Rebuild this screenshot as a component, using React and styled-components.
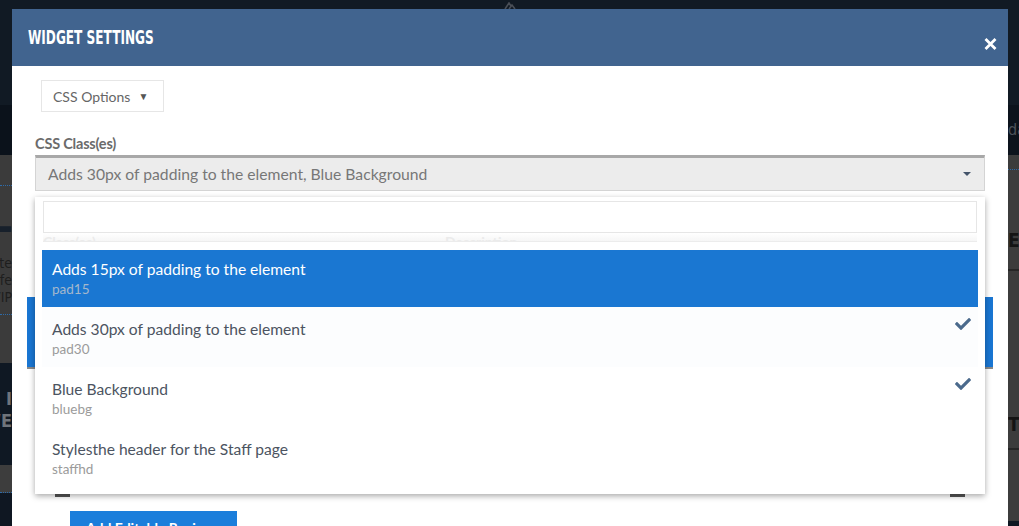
import React from "react";
import styled, { createGlobalStyle } from "styled-components";
import { FaCheck } from "react-icons/fa";

const GlobalStyle = createGlobalStyle`
  html, body {
    margin: 0;
    padding: 0;
  }
  body {
    background: #0f1722;
    font-family: Lato, "Open Sans", sans-serif;
    overflow: hidden;
  }
  * {
    box-sizing: border-box;
  }
`;

const Screen = styled.div`
  position: relative;
  width: 1019px;
  height: 526px;
  overflow: hidden;
  background: #0f1722;
`;

// page behind the modal
const Backdrop = styled.div`
  display: flex;
  flex-direction: column;
  height: 100%;
`;
const TopBar = styled.div`
  height: 105px;
  flex-shrink: 0;
  background: #111a24;
  display: flex;
  justify-content: center;
  svg {
    margin-top: 2px;
  }
`;
const Lower = styled.div`
  flex: 1;
  display: flex;
  justify-content: space-between;
`;
const Rail = styled.div`
  width: ${p => p.$w}px;
  display: flex;
  flex-direction: column;
  overflow: hidden;
`;
const Band = styled.div`
  height: ${p => p.$h}px;
  flex-shrink: 0;
  background: ${p => p.$bg};
  border-bottom: ${p => p.$line || "none"};
  display: flex;
  flex-direction: column;
  justify-content: ${p => p.$justify || "center"};
  align-items: ${p => p.$align || "flex-start"};
  padding-bottom: ${p => p.$pb || 0}px;
  overflow: hidden;
`;
const RailText = styled.span`
  white-space: nowrap;
  font-family: "DejaVu Sans Condensed", "DejaVu Sans", sans-serif;
  font-weight: ${p => p.$weight || 400};
  font-size: ${p => p.$size}px;
  line-height: ${p => p.$lh || p.$size}px;
  color: ${p => p.$color};
  margin-top: ${p => p.$mt || 0}px;
`;
const Dotted = styled.div`
  width: 100%;
  border-top: 1px dotted #2d6aa8;
  margin-top: ${p => p.$mt || 0}px;
`;

// modal
const Modal = styled.div`
  position: absolute;
  top: 9px;
  left: 12px;
  width: 996px;
  bottom: -120px;
  background: #fff;
  display: flex;
  flex-direction: column;
`;
const Header = styled.div`
  height: 57px;
  flex-shrink: 0;
  background: #41648f;
  display: flex;
  align-items: center;
  justify-content: space-between;
  padding: 0 11px 0 16px;
`;
const Title = styled.h4`
  margin: 0;
  color: #fff;
  font-family: "DejaVu Sans Condensed", "DejaVu Sans", sans-serif;
  font-weight: 700;
  font-size: 19.5px;
  line-height: 24px;
  white-space: nowrap;
  transform: scaleX(0.69);
  transform-origin: left center;
`;
const Close = styled.button`
  border: 0;
  background: none;
  padding: 0;
  margin-top: 12px;
  display: flex;
  cursor: pointer;
`;
const Body = styled.div`
  padding: 14px 23px 0;
  display: flex;
  flex-direction: column;
  align-items: flex-start;
`;
const OptionsButton = styled.button`
  margin-left: 6px;
  width: 123px;
  height: 32px;
  border: 1px solid #e6e6e6;
  background: #fff;
  font-family: Lato, sans-serif;
  font-size: 14px;
  color: #666;
  display: flex;
  align-items: center;
  gap: 8px;
  padding: 0 0 0 11px;
`;
const SmallCaret = styled.span`
  font-size: 10px;
  color: #555;
`;
const Label = styled.label`
  margin-top: 23px;
  font-weight: 700;
  font-size: 14.5px;
  line-height: 17px;
  letter-spacing: -0.2px;
  color: #6b6b6b;
`;
const SelectWrap = styled.div`
  position: relative;
  width: 100%;
  margin-top: 3px;
`;
const Select = styled.div`
  height: 36px;
  background: #ececec;
  border: 1px solid #d4d4d4;
  border-top: 3px solid #a8a8a8;
  display: flex;
  align-items: center;
  justify-content: space-between;
  padding: 0 13px 0 12px;
  font-size: 15.7px;
  color: #777;
`;
const Arrow = styled.span`
  width: 0;
  height: 0;
  border-left: 4px solid transparent;
  border-right: 4px solid transparent;
  border-top: 4px solid #44546a;
`;
const Dropdown = styled.div`
  position: absolute;
  left: 0;
  right: 0;
  top: calc(100% + 6px);
  height: 297px;
  background: #fff;
  box-shadow: 0 2px 6px rgba(0, 0, 0, 0.35);
  padding: 4px 7px 0;
  z-index: 2;
`;
const Search = styled.input`
  display: block;
  width: calc(100% - 2px);
  margin: 0 1px;
  height: 32px;
  border: 1px solid #e6e6e6;
  outline: none;
  background: #fff;
`;
const GhostHead = styled.div`
  height: 9px;
  margin: 0 1px;
  display: grid;
  grid-template-columns: 402px 1fr;
  border-bottom: 1px solid #ececec;
  background: linear-gradient(#fff, #f6f6f6);
  overflow: hidden;
  span {
    font-weight: 700;
    font-size: 14px;
    line-height: 14px;
    padding-top: 2px;
    color: #ebebeb;
  }
`;
const List = styled.div`
  padding-top: 5px;
`;
const Option = styled.div`
  position: relative;
  height: ${p => (p.$active ? 57 : 60)}px;
  margin-top: ${p => (p.$active ? 3 : 0)}px;
  padding: ${p => (p.$active ? 9 : 12)}px 10px 0;
  background: ${p => (p.$active ? "#1a77d2" : p.$hover ? "#fcfdfe" : "#fff")};
`;
const OptionTitle = styled.div`
  font-size: 15.6px;
  line-height: 20px;
  color: ${p => (p.$active ? "#fff" : "#4c5461")};
`;
const OptionSub = styled.div`
  font-size: 13.5px;
  line-height: 20px;
  color: ${p => (p.$active ? "#a4b8cc" : "#9b9b9b")};
`;
const Check = styled.span`
  position: absolute;
  top: 9px;
  right: 7px;
  display: flex;
  color: #4b6a8c;
`;
const Banner = styled.div`
  align-self: stretch;
  margin: 106px -8px 0;
  height: 72px;
  background: #1a76d2;
  border-bottom: 2px solid #8a8a8a;
`;
const EdgeRow = styled.div`
  width: 100%;
  margin-top: 125px;
  padding: 0 20px;
  display: flex;
  justify-content: space-between;
`;
const Edge = styled.span`
  width: 15px;
  height: 3px;
  background: #555;
`;
const AddButton = styled.button`
  margin: 14px 0 0 35px;
  width: 167px;
  height: 40px;
  border: 0;
  background: #1b7edb;
  color: #fff;
  font-family: Lato, sans-serif;
  font-weight: 700;
  font-size: 14px;
  line-height: 20px;
  text-align: left;
  padding: 7px 0 0 16px;
  align-self: flex-start;
  display: flex;
  align-items: flex-start;
`;

const options = [
  { title: "Adds 15px of padding to the element", sub: "pad15", active: true },
  { title: "Adds 30px of padding to the element", sub: "pad30", checked: true, hover: true },
  { title: "Blue Background", sub: "bluebg", checked: true },
  { title: "Stylesthe header for the Staff page", sub: "staffhd" }
];

const rightRows = [56, 60, 60, 56, 63, 60, 60];

export default function App() {
  return (
    <Screen>
      <GlobalStyle />
      <Backdrop>
        <TopBar>
          <svg width="12" height="8" viewBox="0 0 12 8">
            <path d="M1 7 L5 1 L7 4 M5 7 L8 3 L11 7" fill="none" stroke="#4a4f57" strokeWidth="1.6" />
          </svg>
        </TopBar>
        <Lower>
          <Rail $w={12}>
            <Band $h={50} $bg="#0b121b" />
            <Band $h={208} $bg="#3b3b3b" $justify="flex-start" $align="flex-end">
              <Dotted $mt={30} />
              <RailText $size={40} $lh={40} $weight={700} $color="#17202b" $mt={12}>
                PANEL
              </RailText>
              <RailText $size={14} $lh={17} $color="#1e1e1e" $mt={17}>
                Lorem website
              </RailText>
              <RailText $size={14} $lh={17} $color="#1e1e1e">
                this is safe
              </RailText>
              <RailText $size={14} $lh={17} $color="#1e1e1e">
                VIP
              </RailText>
              <Dotted $mt={8} />
            </Band>
            <Band $h={102} $bg="#0f1823" $align="flex-end" $pb={8}>
              <RailText $size={18} $lh={22} $weight={700} $color="#6f747b">
                I
              </RailText>
              <RailText $size={18} $lh={22} $weight={700} $color="#6f747b">
                NEWE
              </RailText>
            </Band>
            <Band $h={28} $bg="#3d3d3d" $line="1px dotted #2d6aa8" />
            <Band $h={60} $bg="#0f1722" />
          </Rail>
          <Rail $w={11}>
            <Band $h={50} $bg="#0c131c">
              <RailText $size={16} $color="#4d525a">
                dashboard
              </RailText>
            </Band>
            <Band $h={366} $bg="#3c3c3c" $justify="flex-start">
              <Dotted $mt={14} />
              {rightRows.map((h, i) => (
                <Band key={i} $h={i === 0 ? h - 15 : h} $bg="#3c3c3c" $line="2px solid #262626">
                  {i === 1 && (
                    <RailText $size={19} $weight={700} $color="#141414">
                      ED
                    </RailText>
                  )}
                  {i === 4 && (
                    <RailText $size={19} $weight={700} $color="#141414" $mt={14}>
                      TS
                    </RailText>
                  )}
                </Band>
              ))}
            </Band>
          </Rail>
        </Lower>
      </Backdrop>

      <Modal>
        <Header>
          <Title>WIDGET SETTINGS</Title>
          <Close aria-label="close">
            <svg width="13" height="12" viewBox="0 0 13 12">
              <path d="M1.5 1 L11.5 11 M11.5 1 L1.5 11" stroke="#fff" strokeWidth="2.8" />
            </svg>
          </Close>
        </Header>
        <Body>
          <OptionsButton>
            CSS Options <SmallCaret>▼</SmallCaret>
          </OptionsButton>
          <Label>CSS Class(es)</Label>
          <SelectWrap>
            <Select>
              <span>Adds 30px of padding to the element, Blue Background</span>
              <Arrow />
            </Select>
            <Dropdown>
              <Search />
              <GhostHead>
                <span>Class(es)</span>
                <span>Description</span>
              </GhostHead>
              <List>
                {options.map(o => (
                  <Option key={o.sub} $active={o.active} $hover={o.hover}>
                    <OptionTitle $active={o.active}>{o.title}</OptionTitle>
                    <OptionSub $active={o.active}>{o.sub}</OptionSub>
                    {o.checked && (
                      <Check>
                        <FaCheck size={16} />
                      </Check>
                    )}
                  </Option>
                ))}
              </List>
            </Dropdown>
          </SelectWrap>
          <Banner />
          <EdgeRow>
            <Edge />
            <Edge />
          </EdgeRow>
          <AddButton>Add Editable Region</AddButton>
        </Body>
      </Modal>
    </Screen>
  );
}
